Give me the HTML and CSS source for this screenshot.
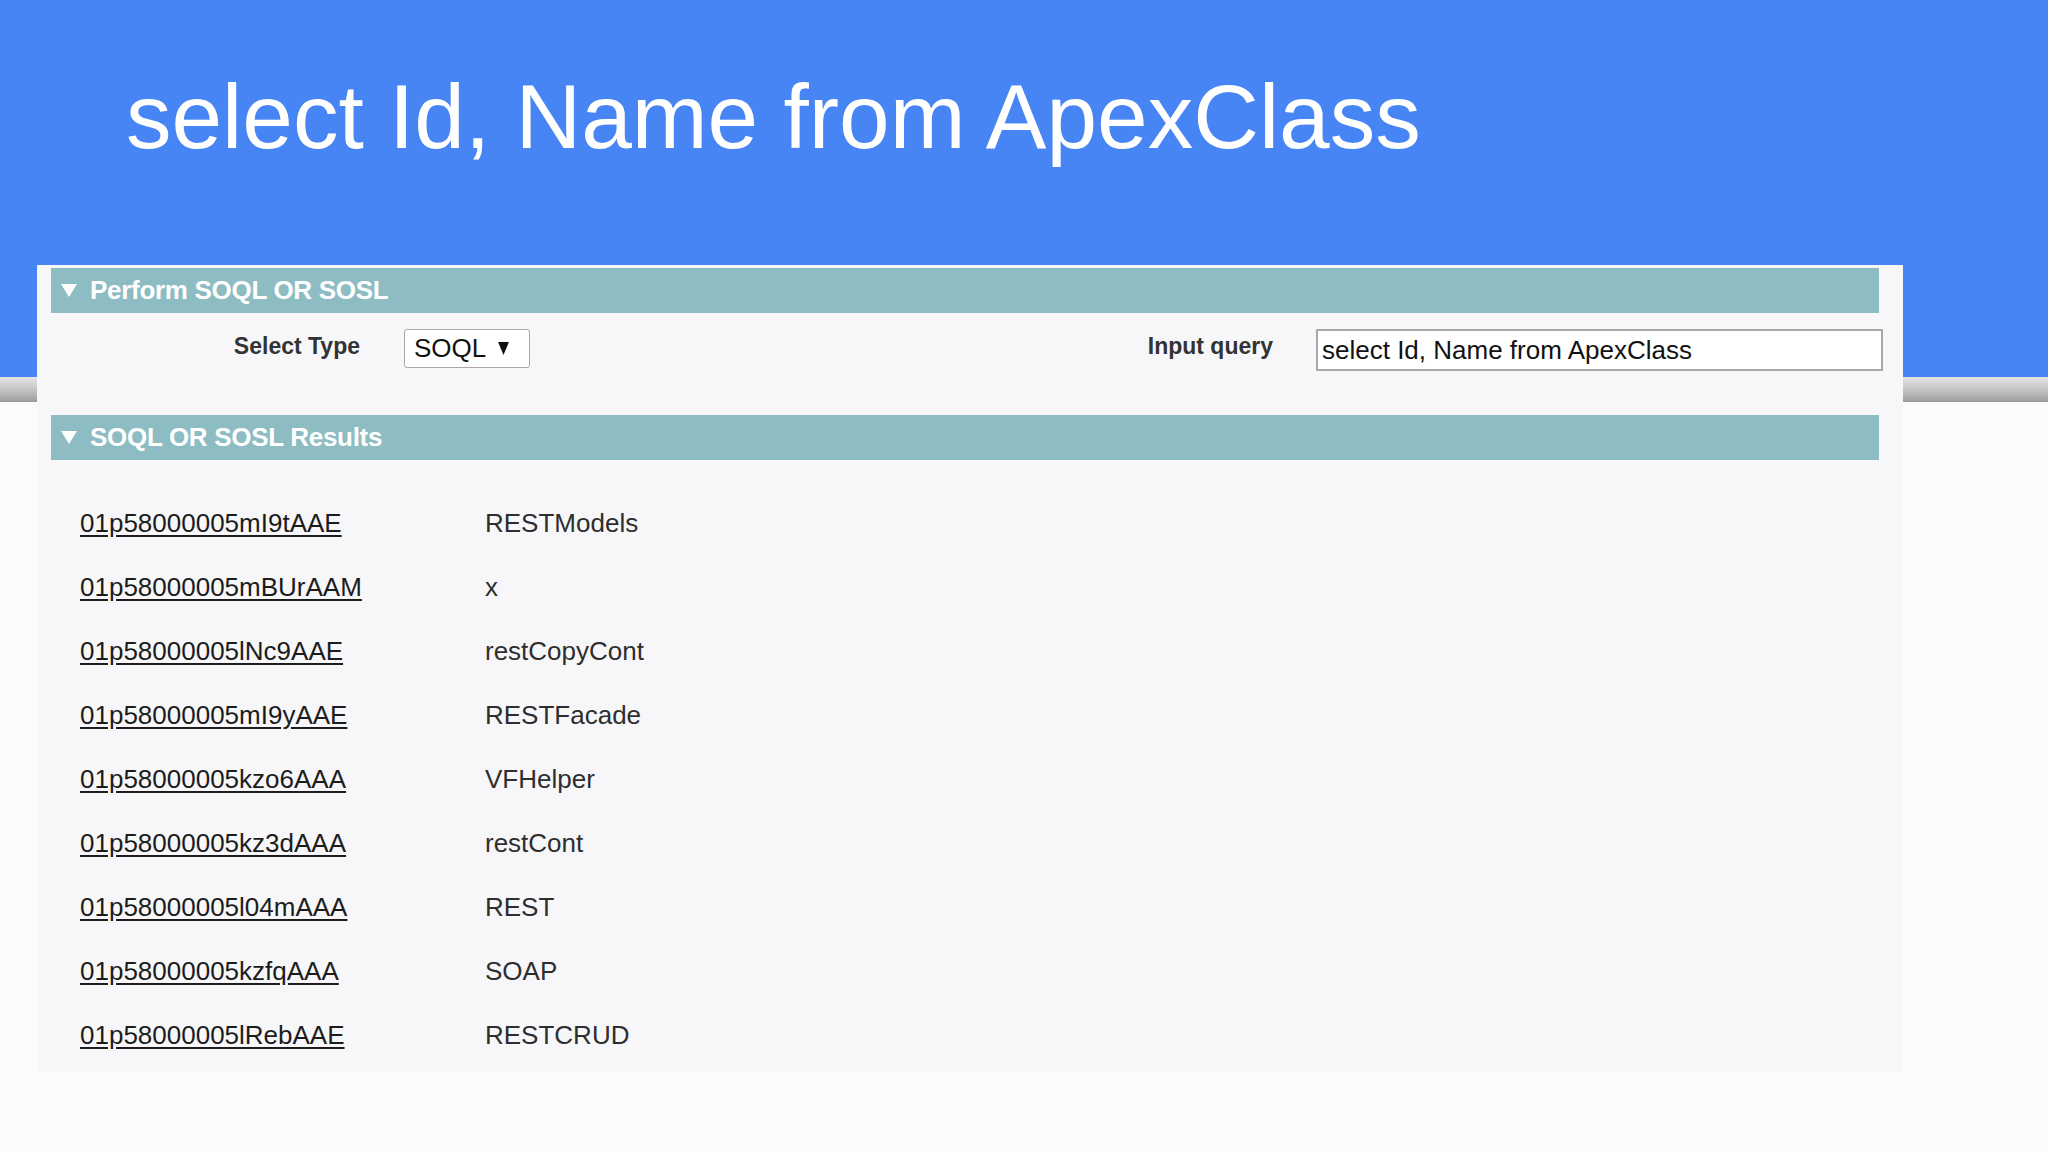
FILE: index.html
```html
<!DOCTYPE HTML>
<html>
<head>
    <title>select Id, Name from ApexClass</title>
    <link rel="stylesheet" href="styles.css">
</head>
<body>
    <div class="slide-head">
        <p class="slide-title">select Id, Name from ApexClass</p>
    </div>
    <div class="slide-bar"></div>

    <div class="panel">
        <div class="section-head">
            <svg class="twist" viewBox="0 0 16 13"><polygon points="0,0 16,0 8,13" fill="#fff"/></svg>
            Perform SOQL OR SOSL
        </div>

        <div class="form-row">
            <label class="field-label label-type">Select Type</label>
            <div class="select-box">
                SOQL
                <svg class="select-arrow" viewBox="0 0 10 12"><polygon points="0,0 10,0 5,12" fill="#111"/></svg>
            </div>
            <label class="field-label label-query">Input query</label>
            <div class="query-box">select Id, Name from ApexClass</div>
        </div>

        <div class="section-head">
            <svg class="twist" viewBox="0 0 16 13"><polygon points="0,0 16,0 8,13" fill="#fff"/></svg>
            SOQL OR SOSL Results
        </div>

        <div class="results">
            <a class="rec-id">01p58000005mI9tAAE</a><span class="rec-name">RESTModels</span>
            <a class="rec-id">01p58000005mBUrAAM</a><span class="rec-name">x</span>
            <a class="rec-id">01p58000005lNc9AAE</a><span class="rec-name">restCopyCont</span>
            <a class="rec-id">01p58000005mI9yAAE</a><span class="rec-name">RESTFacade</span>
            <a class="rec-id">01p58000005kzo6AAA</a><span class="rec-name">VFHelper</span>
            <a class="rec-id">01p58000005kz3dAAA</a><span class="rec-name">restCont</span>
            <a class="rec-id">01p58000005l04mAAA</a><span class="rec-name">REST</span>
            <a class="rec-id">01p58000005kzfqAAA</a><span class="rec-name">SOAP</span>
            <a class="rec-id">01p58000005lRebAAE</a><span class="rec-name">RESTCRUD</span>
        </div>
    </div>
</body>
</html>
```

FILE: styles.css
```css
body{
    margin:0;
    background-color:#fbfafc;
    font-family:"Liberation Sans", Arial, sans-serif;
}

.slide-head{
    background-color:#4785f4;
    height:377px;
    overflow:hidden;
}

.slide-title{
    margin:0;
    padding:62px 0 0 126px;
    color:white;
    font-size:91px;
    line-height:1.2;
}

.slide-bar{
    height:25px;
    background:linear-gradient(#e6e6e8, #bdbdbf 60%, #9a9a9c);
}

.panel{
    position:relative;
    margin:-137px 0 0 37px;
    width:1828px;
    padding:3px 24px 5px 14px;
    background-color:#f7f7f9;
}

.section-head{
    display:flex;
    align-items:center;
    height:45px;
    background-color:#8dbcc2;
    color:white;
    font-size:26px;
    font-weight:bold;
    letter-spacing:-0.3px;
}

.twist{
    width:16px;
    height:13px;
    margin:0 13px 0 10px;
}

.form-row{
    display:flex;
    align-items:flex-start;
    height:102px;
    padding-top:16px;
    box-sizing:border-box;
}

.field-label{
    font-size:23px;
    font-weight:bold;
    color:#333;
    text-align:right;
    padding-top:4px;
}

.label-type{
    width:309px;
    margin-right:44px;
}

.select-box{
    display:flex;
    align-items:center;
    width:126px;
    height:39px;
    box-sizing:border-box;
    padding-left:9px;
    background-color:white;
    border:1px solid #a8a8a8;
    border-radius:3px;
    font-size:26px;
    color:#111;
}

.select-arrow{
    width:11px;
    height:13px;
    margin-left:12px;
}

.label-query{
    margin-left:auto;
    margin-right:43px;
}

.query-box{
    width:567px;
    height:42px;
    box-sizing:border-box;
    margin-right:-4px;
    padding:4px 0 0 4px;
    background-color:white;
    border:2px solid #a9a9ab;
    font-size:26px;
    color:#111;
}

.results{
    display:grid;
    grid-template-columns:405px 1fr;
    grid-auto-rows:64px;
    align-items:center;
    padding:31px 0 0 29px;
    font-size:26px;
}

.rec-id{
    color:#1c1c1c;
    text-decoration:underline;
    text-underline-offset:3px;
}

.rec-name{
    color:#2e2e2e;
}
```
